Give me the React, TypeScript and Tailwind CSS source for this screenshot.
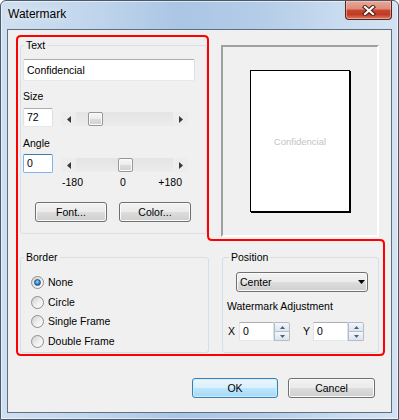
import React, { ReactNode } from "react";

const btnGrey =
  "rounded-[3px] border border-[#707070] bg-[linear-gradient(to_bottom,#f2f2f2_0%,#ebebeb_50%,#dddddd_50%,#cfcfcf_100%)] shadow-[inset_0_0_0_1px_#fbfbfb]";
const btnBlue =
  "rounded-[3px] border border-[#3c7fb1] bg-[linear-gradient(to_bottom,#eaf6fd_0%,#d9f0fc_50%,#bee6fd_50%,#a7d9f5_100%)] shadow-[inset_0_0_0_1px_#cdeefd]";
const textBox =
  "border border-[#abadb3] border-l-[#e2e3ea] border-r-[#dbdfe6] border-b-[#e3e9ef] bg-white";

interface GroupProps {
  label: string;
  labelClass: string;
  className: string;
  children: ReactNode;
}

const Group = ({ label, labelClass, className, children }: GroupProps) => (
  <div className={`rounded-[3px] border border-[#d5dfe5] ${className}`}>
    <div className={`-mt-[7px] w-fit bg-[#f0f0f0] px-[2px] leading-[13px] ${labelClass}`}>
      {label}
    </div>
    {children}
  </div>
);

const Slider = ({ thumb }: { thumb: string }) => (
  <div className="flex h-[14px] w-[127px] bg-[linear-gradient(to_bottom,#e4e4e4,#ececec)]">
    <div className="flex w-[15px] items-center justify-center bg-[#ededed]">
      <svg width="4" height="7" viewBox="0 0 4 7" className="fill-[#3a3a3a]">
        <polygon points="4,0 4,7 0,3.5" />
      </svg>
    </div>
    <div className="flex-1">
      <div
        className={`h-[14px] w-[15px] rounded-[2px] border border-[#979797] bg-[linear-gradient(to_bottom,#f6f6f6_0%,#ececec_50%,#dcdcdc_50%,#d2d2d2_100%)] shadow-[inset_0_0_0_1px_#fbfbfb] ${thumb}`}
      />
    </div>
    <div className="flex w-[15px] items-center justify-center bg-[#ededed]">
      <svg width="4" height="7" viewBox="0 0 4 7" className="fill-[#3a3a3a]">
        <polygon points="0,0 0,7 4,3.5" />
      </svg>
    </div>
  </div>
);

const Spin = ({ value }: { value: string }) => (
  <div className="flex h-[19px]">
    <div className={`flex w-[35px] items-center pl-[3px] ${textBox}`}>{value}</div>
    <div className="flex w-[16px] flex-col">
      <div className="flex flex-1 items-center justify-center rounded-tr-[2px] border border-[#b2bccb] bg-[linear-gradient(to_bottom,#f4f7fa,#dde4ec)]">
        <svg width="5" height="3" viewBox="0 0 5 3" className="fill-[#4b6184]">
          <polygon points="0,3 5,3 2.5,0" />
        </svg>
      </div>
      <div className="flex flex-1 items-center justify-center rounded-br-[2px] border border-t-0 border-[#b2bccb] bg-[linear-gradient(to_bottom,#f4f7fa,#dde4ec)]">
        <svg width="5" height="3" viewBox="0 0 5 3" className="fill-[#4b6184]">
          <polygon points="0,0 5,0 2.5,3" />
        </svg>
      </div>
    </div>
  </div>
);

const Radio = ({ label, checked }: { label: string; checked?: boolean }) => (
  <div className="flex h-[19.5px] items-center">
    <div className="ml-[10px] flex h-[13px] w-[13px] items-center justify-center rounded-full border border-[#8e8f8f] bg-[linear-gradient(135deg,#d0d0d0,#f2f2f2_60%,#fbfbfb)]">
      {checked && (
        <div className="h-[7px] w-[7px] rounded-full border border-[#1a4f86] bg-[radial-gradient(circle_at_45%_35%,#9ad8fb,#2f86cc_55%,#124f8e)]" />
      )}
    </div>
    <span className="ml-[4px]">{label}</span>
  </div>
);

const App = () => {
  return (
    <div className="relative h-[420px] w-[399px] font-['Liberation_Sans',Arial,sans-serif] text-[10.5px] leading-[13px] text-black">
      <div className="flex h-full flex-col rounded-t-[6px] border border-[#4b5a6b] bg-[linear-gradient(to_right,#cfdff0_0%,#bfd4ec_25%,#aac6e4_45%,#b4cce8_65%,#c8dbef_85%,#d3e3f2_100%)] shadow-[inset_0_0_0_1px_rgba(255,255,255,0.55)]">
        {/* title bar */}
        <div className="flex h-[28px] shrink-0 items-start">
          <span className="ml-[7px] mt-[5px] text-[12px] leading-[16px] [text-shadow:0_0_8px_#fff]">
            Watermark
          </span>
          <div className="ml-auto mr-[6px] flex h-[19px] w-[47px] items-center justify-center rounded-b-[4px] border border-t-0 border-[#5e2219] bg-[linear-gradient(to_bottom,#e9a898_0%,#dc8c79_45%,#c8462f_50%,#c13a22_75%,#d8806b_100%)] shadow-[inset_0_0_0_1px_rgba(255,220,210,0.45)]">
            <svg width="14" height="11" viewBox="0 0 14 11">
              <path d="M3 2 L11 9 M11 2 L3 9" stroke="#4a1d16" strokeWidth="4.2" strokeLinecap="square" />
              <path d="M3 2 L11 9 M11 2 L3 9" stroke="#ffffff" strokeWidth="2.2" strokeLinecap="square" />
            </svg>
          </div>
        </div>

        {/* client area */}
        <div className="mx-[6px] mb-[6px] flex-1 border border-[#5f6f82] bg-[#f0f0f0]">
          <div className="ml-[12px] mt-[15px] flex items-start">
            <Group label="Text" labelClass="ml-[3px]" className="h-[189px] w-[187px]">
              <div className={`ml-[2px] mt-[7px] flex h-[22px] w-[172px] items-center rounded-[2px] px-[3px] ${textBox}`}>
                Confidencial
              </div>
              <div className="ml-[2px] mt-[9px]">Size</div>
              <div className="mt-[5px] flex items-start">
                <div className={`ml-[2px] flex h-[19px] w-[30px] items-center rounded-[2px] px-[3px] ${textBox}`}>
                  72
                </div>
                <div className="ml-[8px] mt-[4px]">
                  <Slider thumb="ml-[12px]" />
                </div>
              </div>
              <div className="ml-[2px] mt-[10px]">Angle</div>
              <div className="mt-[4px] flex items-start">
                <div className="ml-[2px] flex h-[19px] w-[30px] items-center rounded-[2px] border border-[#7eb4ea] border-t-[#3d7bad] bg-white px-[3px]">
                  0
                </div>
                <div className="ml-[8px] mt-[4px]">
                  <Slider thumb="ml-[42px]" />
                </div>
              </div>
              <div className="ml-[40px] mt-[3px] flex w-[127px] pl-[1px] pr-[6px]">
                <span className="w-[58px]">-180</span>
                <span>0</span>
                <span className="ml-auto">+180</span>
              </div>
              <div className="ml-[14px] mt-[13px] flex gap-[12px]">
                <div className={`flex h-[20px] w-[72px] items-center justify-center ${btnGrey}`}>Font...</div>
                <div className={`flex h-[20px] w-[72px] items-center justify-center ${btnGrey}`}>Color...</div>
              </div>
            </Group>

            <div className="ml-[14px] flex h-[192px] w-[158px] items-center justify-center border-2 border-[#a0a0a0] border-r-white border-b-white">
              <div className="flex h-[142px] w-[100px] items-center justify-center border border-black bg-white text-[9.5px] text-[#c4c4c4] shadow-[1px_1px_0_#000]">
                Confidencial
              </div>
            </div>
          </div>

          <div className="ml-[12px] mt-[20px] flex">
            <Group label="Border" labelClass="ml-[3px]" className="h-[96px] w-[189px]">
              <div className="mt-[9px]">
                <Radio label="None" checked />
                <Radio label="Circle" />
                <Radio label="Single Frame" />
                <Radio label="Double Frame" />
              </div>
            </Group>
            <Group label="Position" labelClass="ml-[6px]" className="ml-[13px] h-[96px] w-[157px]">
              <div className={`ml-[13px] mt-[8px] flex h-[20px] w-[132px] items-center pl-[3px] pr-[2px] ${btnGrey}`}>
                <span>Center</span>
                <svg width="7" height="4" viewBox="0 0 7 4" className="ml-auto fill-black">
                  <polygon points="0,0 7,0 3.5,4" />
                </svg>
              </div>
              <div className="ml-[4px] mt-[8px]">Watermark Adjustment</div>
              <div className="mt-[9px] flex items-center">
                <span className="ml-[5px] w-[11px]">X</span>
                <Spin value="0" />
                <span className="ml-[13px] w-[10px]">Y</span>
                <Spin value="0" />
              </div>
            </Group>
          </div>

          <div className="mt-[25px] flex justify-end gap-[10px] pr-[16px]">
            <div className={`flex h-[20px] w-[86px] items-center justify-center ${btnBlue}`}>OK</div>
            <div className={`flex h-[20px] w-[87px] items-center justify-center ${btnGrey}`}>Cancel</div>
          </div>
        </div>
      </div>

      {/* red highlight drawn over the dialog */}
      <svg className="pointer-events-none absolute left-0 top-0" width="399" height="420" viewBox="0 0 399 420">
        <path
          d="M21 36 H204 Q208 36 208 40 V236 Q208 240 212 240 H380 Q384 240 384 244 V351 Q384 355 380 355 H21 Q17 355 17 351 V40 Q17 36 21 36 Z"
          fill="none"
          stroke="#ff0000"
          strokeWidth="2"
        />
      </svg>
    </div>
  );
};

export default App;
